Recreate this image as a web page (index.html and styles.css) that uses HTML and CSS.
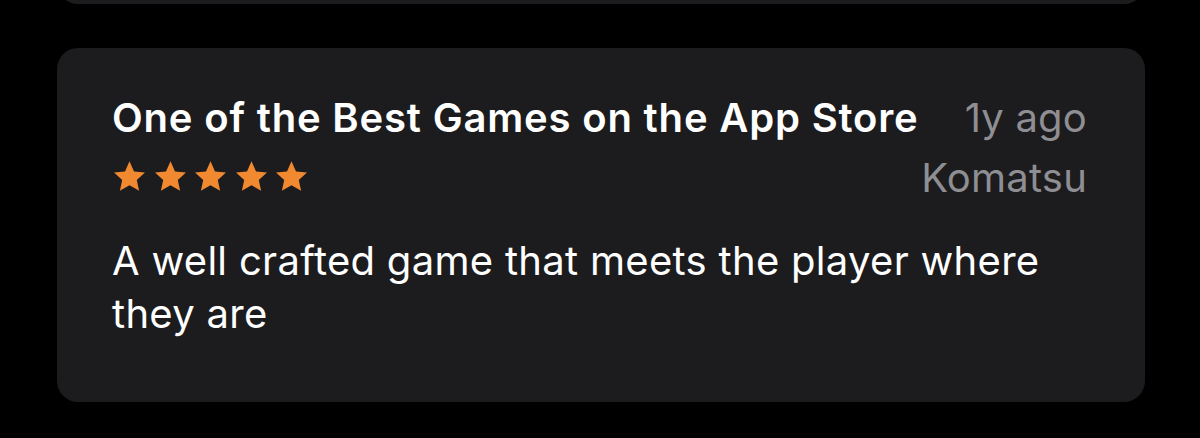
FILE: index.html
```html
<!DOCTYPE html>
<html lang="en">
<head>
<meta charset="utf-8">
<title>Reviews</title>
<link rel="stylesheet" href="styles.css">
</head>
<body>
<div class="list">
  <div class="card card-prev"></div>
  <article class="card review">
    <header class="review-head">
      <div class="head-main">
        <h2 class="review-title">One of the Best Games on the App Store</h2>
        <div class="stars" aria-label="5 out of 5 stars">
          <svg class="star" viewBox="0 0 24 24"><path d="M12 1.6l3.1 6.9 7.5.8-5.6 5.1 1.6 7.4L12 18l-6.6 3.8 1.6-7.4L1.4 9.3l7.5-.8z"/></svg>
          <svg class="star" viewBox="0 0 24 24"><path d="M12 1.6l3.1 6.9 7.5.8-5.6 5.1 1.6 7.4L12 18l-6.6 3.8 1.6-7.4L1.4 9.3l7.5-.8z"/></svg>
          <svg class="star" viewBox="0 0 24 24"><path d="M12 1.6l3.1 6.9 7.5.8-5.6 5.1 1.6 7.4L12 18l-6.6 3.8 1.6-7.4L1.4 9.3l7.5-.8z"/></svg>
          <svg class="star" viewBox="0 0 24 24"><path d="M12 1.6l3.1 6.9 7.5.8-5.6 5.1 1.6 7.4L12 18l-6.6 3.8 1.6-7.4L1.4 9.3l7.5-.8z"/></svg>
          <svg class="star" viewBox="0 0 24 24"><path d="M12 1.6l3.1 6.9 7.5.8-5.6 5.1 1.6 7.4L12 18l-6.6 3.8 1.6-7.4L1.4 9.3l7.5-.8z"/></svg>
        </div>
      </div>
      <div class="head-meta">
        <span class="date">1y ago</span>
        <span class="author">Komatsu</span>
      </div>
    </header>
    <p class="review-body">A well crafted game that meets the player where they are</p>
  </article>
</div>
</body>
</html>
```
FILE: styles.css
```css
html, body {
  margin: 0;
  background: #000;
}

body {
  font-family: Inter, "Noto Sans", sans-serif;
  color: #fff;
  overflow: hidden;
  height: 438px;
}

.list {
  display: flex;
  flex-direction: column;
  gap: 44px;
  padding: 0 55px 0 57px;
  margin-top: -60px;
}

.card {
  background: #1c1c1e;
  border-radius: 21px;
}

.card-prev {
  height: 64px;
}

.review {
  height: 354px;
  box-sizing: border-box;
  padding: 40px 58px 0 55px;
}

.review-head {
  display: flex;
  justify-content: space-between;
  align-items: flex-start;
}

.head-main {
  display: flex;
  flex-direction: column;
  flex-shrink: 0;
}

.review-title {
  margin: 0;
  font-size: 40px;
  font-weight: 600;
  line-height: 60px;
  letter-spacing: 0.82px;
  white-space: nowrap;
}

.stars {
  display: flex;
  gap: 5.5px;
  margin-top: 11px;
}

.star {
  width: 35px;
  height: 35px;
  fill: #f0892f;
}

.head-meta {
  display: flex;
  flex-direction: column;
  align-items: flex-end;
  color: #8e8e93;
  font-size: 40px;
  line-height: 60px;
  letter-spacing: 0.2px;
}

.review-body {
  margin: 26px 0 0;
  font-size: 40px;
  line-height: 53px;
  letter-spacing: 0.3px;
}
```
